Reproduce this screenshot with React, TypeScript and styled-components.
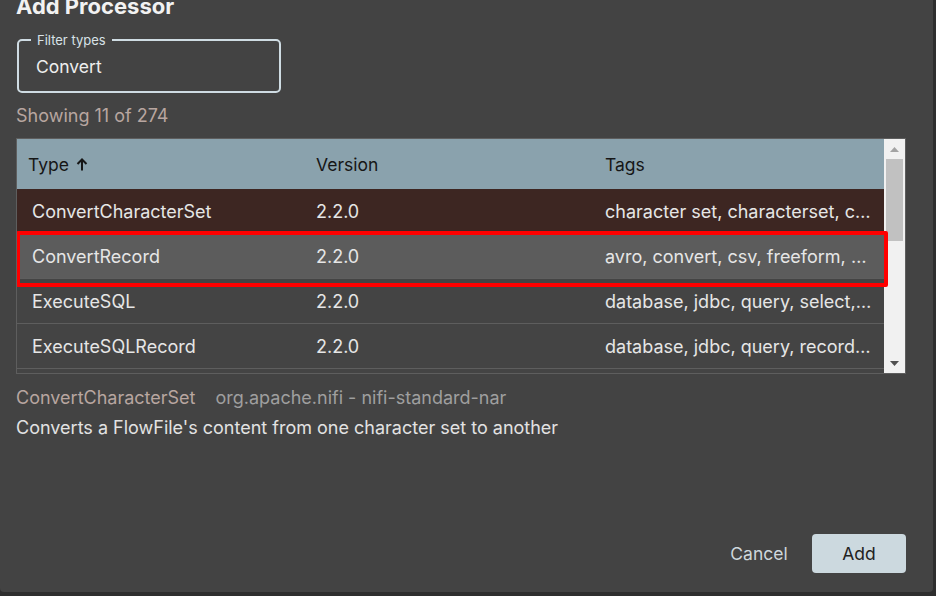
import React from 'react';
import styled, { createGlobalStyle } from 'styled-components';

interface ProcessorRow {
  type: string;
  version: string;
  tags: string;
}

const GlobalStyle = createGlobalStyle`
  html, body {
    margin: 0;
    padding: 0;
    background: #2e2e2e;
    overflow: hidden;
  }
  * {
    box-sizing: border-box;
  }
`;

const Dialog = styled.div`
  width: 933px;
  height: 592px;
  background: #434343;
  border-radius: 0 0 4px 4px;
  padding: 0 27px 0 16px;
  display: flex;
  flex-direction: column;
  font-family: Inter, 'Noto Sans', sans-serif;
  color: #e4e4e4;
  overflow: hidden;
`;

const Title = styled.h1`
  margin: -7px 0 0 0;
  font-size: 22px;
  line-height: 26px;
  font-weight: 700;
  color: #f2f2f2;
`;

const FilterField = styled.div`
  position: relative;
  margin-top: 20px;
  margin-left: 1px;
  width: 264px;
  height: 54px;
  border: 2px solid #cfdce3;
  border-radius: 5px;
  display: flex;
  align-items: center;
  padding-left: 17px;
  font-size: 17.5px;
  color: #eeeeee;
`;

const FilterLabel = styled.span`
  position: absolute;
  top: -9px;
  left: 12px;
  padding: 0 6px;
  background: #434343;
  font-size: 13px;
  line-height: 16px;
  color: #d8e2e7;
`;

const Count = styled.div`
  margin-top: 12px;
  font-size: 18px;
  line-height: 22px;
  color: #b8a6a0;
`;

const TableFrame = styled.div`
  margin-top: 11px;
  height: 236px;
  border: 1px solid #5e5e5e;
  display: flex;
  overflow: hidden;
`;

const TableBody = styled.div`
  flex: 1;
  display: flex;
  flex-direction: column;
  min-width: 0;
`;

const Grid = styled.div`
  display: grid;
  grid-template-columns: 284px 289px 1fr;
  align-items: center;
`;

const HeaderRow = styled(Grid)`
  height: 50px;
  flex-shrink: 0;
  background: #8aa2ad;
  color: #161616;
  font-size: 17.5px;
`;

const HeaderCell = styled.div<{ $first?: boolean }>`
  padding-left: ${(p) => (p.$first ? '11px' : '15px')};
  display: flex;
  align-items: center;
  gap: 7px;
`;

const Row = styled(Grid)<{ $bg: string }>`
  position: relative;
  height: 45px;
  flex-shrink: 0;
  background: ${(p) => p.$bg};
  border-bottom: 1px solid #5e5e5e;
  font-size: 18px;
  color: #e6e6e6;
`;

const Cell = styled.div`
  padding-left: 15px;
  padding-right: 10px;
  white-space: nowrap;
  overflow: hidden;
  text-overflow: ellipsis;
`;

// annotation box drawn around the picked row
const Highlight = styled.div`
  position: absolute;
  left: -1px;
  right: -4px;
  top: -3px;
  bottom: -9px;
  border: 4px solid #ff0000;
  border-radius: 2px;
  pointer-events: none;
  z-index: 2;
`;

const Scrollbar = styled.div`
  width: 21px;
  flex-shrink: 0;
  background: #f1f1f1;
  display: flex;
  flex-direction: column;
  align-items: center;
  padding: 0 2px;
`;

const ScrollArrow = styled.div`
  height: 20px;
  width: 100%;
  display: flex;
  align-items: center;
  justify-content: center;
`;

const ScrollTrack = styled.div`
  flex: 1;
  width: 100%;
`;

const ScrollThumb = styled.div`
  width: 100%;
  height: 82px;
  background: #c1c1c1;
`;

const Details = styled.div`
  margin-top: 13px;
  display: flex;
  gap: 20px;
  font-size: 18px;
  line-height: 22px;
`;

const DetailType = styled.span`
  color: #b8a6a0;
`;

const DetailBundle = styled.span`
  color: #9f9f9f;
`;

const Description = styled.div`
  margin-top: 8px;
  font-size: 18px;
  line-height: 22px;
  color: #e2e2e2;
`;

const Footer = styled.div`
  margin-top: auto;
  margin-bottom: 19px;
  display: flex;
  justify-content: flex-end;
  gap: 6px;
`;

const Button = styled.button<{ $primary?: boolean }>`
  min-width: 94px;
  height: 39px;
  border: none;
  border-radius: 4px;
  font-family: Inter, 'Noto Sans', sans-serif;
  font-size: 17.5px;
  padding: 0 16px;
  cursor: pointer;
  background: ${(p) => (p.$primary ? '#ccd9df' : 'transparent')};
  color: ${(p) => (p.$primary ? '#222222' : '#cfd8dc')};
`;

const rows: ProcessorRow[] = [
  { type: 'ConvertCharacterSet', version: '2.2.0', tags: 'character set, characterset, conversion, encoding' },
  { type: 'ConvertRecord', version: '2.2.0', tags: 'avro, convert, csv, freeform, generic' },
  { type: 'ExecuteSQL', version: '2.2.0', tags: 'database, jdbc, query, select, sql' },
  { type: 'ExecuteSQLRecord', version: '2.2.0', tags: 'database, jdbc, query, record, select, sql' },
  { type: 'ExtractRecordSchema', version: '2.2.0', tags: 'avro, csv, freeform, generic' },
];

const rowBg = (index: number) => {
  if (index === 0) return '#3d2622';
  if (index === 1) return '#5c5c5c';
  return '#444444';
};

const SortArrow = () => (
  <svg width="12" height="13" viewBox="0 0 12 13">
    <path d="M6 1.5 V12.5 M1.5 6 L6 1.5 L10.5 6" stroke="#161616" strokeWidth="2" fill="none" />
  </svg>
);

const App = () => {
  return (
    <>
      <GlobalStyle />
      <Dialog>
        <Title>Add Processor</Title>
        <FilterField>
          <FilterLabel>Filter types</FilterLabel>
          Convert
        </FilterField>
        <Count>Showing 11 of 274</Count>

        <TableFrame>
          <TableBody>
            <HeaderRow>
              <HeaderCell $first>
                Type <SortArrow />
              </HeaderCell>
              <HeaderCell>Version</HeaderCell>
              <HeaderCell>Tags</HeaderCell>
            </HeaderRow>
            {rows.map((row, index) => (
              <Row key={index} $bg={rowBg(index)}>
                <Cell>{row.type}</Cell>
                <Cell>{row.version}</Cell>
                <Cell>{row.tags}</Cell>
                {index === 1 && <Highlight />}
              </Row>
            ))}
          </TableBody>
          <Scrollbar>
            <ScrollArrow>
              <svg width="9" height="5" viewBox="0 0 9 5">
                <path d="M0 5 L4.5 0 L9 5 Z" fill="#a3a3a3" />
              </svg>
            </ScrollArrow>
            <ScrollTrack>
              <ScrollThumb />
            </ScrollTrack>
            <ScrollArrow>
              <svg width="9" height="5" viewBox="0 0 9 5">
                <path d="M0 0 L9 0 L4.5 5 Z" fill="#505050" />
              </svg>
            </ScrollArrow>
          </Scrollbar>
        </TableFrame>

        <Details>
          <DetailType>ConvertCharacterSet</DetailType>
          <DetailBundle>org.apache.nifi - nifi-standard-nar</DetailBundle>
        </Details>
        <Description>Converts a FlowFile's content from one character set to another</Description>

        <Footer>
          <Button>Cancel</Button>
          <Button $primary>Add</Button>
        </Footer>
      </Dialog>
    </>
  );
};

export default App;
